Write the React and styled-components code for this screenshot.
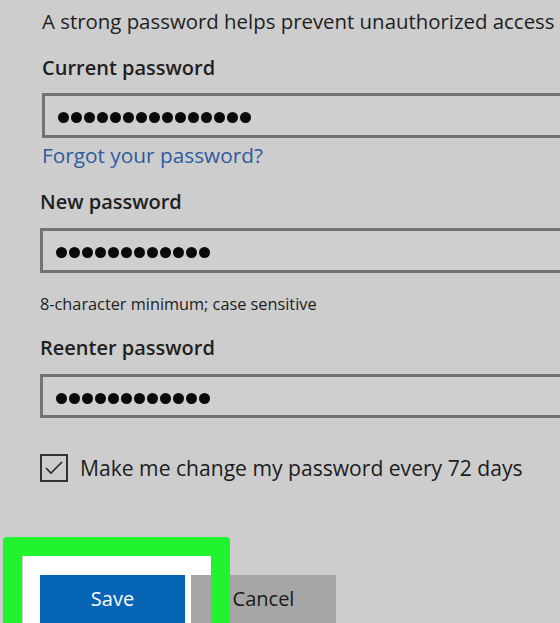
import React from "react";
import styled, { createGlobalStyle } from "styled-components";

const Global = createGlobalStyle`
  html, body { margin: 0; padding: 0; background: #cdcdcd; }
  body { font-family: "Open Sans", "Noto Sans", sans-serif; color: #1c1c1c; }
`;

const Page = styled.div`
  width: 560px;
  height: 623px;
  overflow: hidden;
  box-sizing: border-box;
  padding: 9px 0 0 40px;
  background: #cdcdcd;
`;

const Intro = styled.p`
  margin: 0 0 0 2px;
  font-size: 20.4px;
  line-height: 24px;
  white-space: nowrap;
  color: #1e1e1e;
`;

const Label = styled.div`
  margin: ${(p) => p.$top}px 0 0 ${(p) => p.$shift || 0}px;
  font-size: 20px;
  line-height: 24px;
  font-weight: 600;
  color: #1f1f1f;
  white-space: nowrap;
`;

const Field = styled.div`
  margin: ${(p) => p.$top}px 0 0 ${(p) => p.$shift || 0}px;
  width: 620px;
  height: ${(p) => p.$h}px;
  box-sizing: border-box;
  border: 3px solid #737373;
  background: #cfcfcf;
  display: flex;
  align-items: center;
  gap: 2px;
  padding: 4px 0 0 13px;
`;

const Dot = styled.span`
  width: 11px;
  height: 11px;
  border-radius: 50%;
  background: #0a0a0a;
  flex: none;
`;

const Link = styled.a`
  display: block;
  margin: 5px 0 0 2px;
  font-size: 20.8px;
  line-height: 24px;
  color: #2e5b9f;
  text-decoration: none;
  white-space: nowrap;
`;

const Hint = styled.div`
  margin-top: 21px;
  font-size: 16.3px;
  line-height: 20px;
  color: #1e1e1e;
  white-space: nowrap;
`;

const CheckRow = styled.label`
  margin-top: 36px;
  display: flex;
  align-items: center;
  gap: 12px;
  font-size: 21.1px;
  line-height: 24px;
  color: #1c1c1c;
  white-space: nowrap;
`;

const Box = styled.span`
  width: 28px;
  height: 28px;
  box-sizing: border-box;
  border: 2px solid #333;
  display: flex;
  align-items: center;
  justify-content: center;
  flex: none;
`;

const ButtonArea = styled.div`
  position: relative;
  margin-top: 93px;
  display: flex;
  gap: 6px;
`;

const Backing = styled.div`
  position: absolute;
  left: -17px;
  top: -20px;
  width: 189px;
  height: 120px;
  background: #ffffff;
  z-index: 0;
`;

const Frame = styled.div`
  position: absolute;
  left: -37px;
  top: -38px;
  width: 227px;
  height: 140px;
  box-sizing: border-box;
  border: 19px solid #20f42e;
  border-radius: 4px;
  z-index: 2;
  pointer-events: none;
`;

const Button = styled.button`
  position: relative;
  z-index: 1;
  width: 145px;
  height: 48px;
  border: none;
  margin: 0;
  padding: 0 0 2px;
  font-family: "Open Sans", "Noto Sans", sans-serif;
  font-size: 20px;
  background: ${(p) => (p.$primary ? "#0664b5" : "#a6a6a6")};
  color: ${(p) => (p.$primary ? "#ffffff" : "#1a1a1a")};
`;

const Dots = ({ n }) => (
  <>
    {Array.from({ length: n }, (_, i) => (
      <Dot key={i} />
    ))}
  </>
);

export default function App() {
  return (
    <>
      <Global />
      <Page>
        <Intro>A strong password helps prevent unauthorized access</Intro>
        <Label $top={23} $shift={2}>Current password</Label>
        <Field $top={13} $h={45} $shift={2}>
          <Dots n={15} />
        </Field>
        <Link href="#">Forgot your password?</Link>
        <Label $top={23}>New password</Label>
        <Field $top={14} $h={45}>
          <Dots n={12} />
        </Field>
        <Hint>8-character minimum; case sensitive</Hint>
        <Label $top={22}>Reenter password</Label>
        <Field $top={14} $h={44}>
          <Dots n={12} />
        </Field>
        <CheckRow>
          <Box>
            <svg width="20" height="16" viewBox="0 0 20 16">
              <polyline points="2,8 7,13 18,2" fill="none" stroke="#2a2a2a" strokeWidth="1.6" />
            </svg>
          </Box>
          Make me change my password every 72 days
        </CheckRow>
        <ButtonArea>
          <Backing />
          <Button $primary>Save</Button>
          <Button>Cancel</Button>
          <Frame />
        </ButtonArea>
      </Page>
    </>
  );
}
